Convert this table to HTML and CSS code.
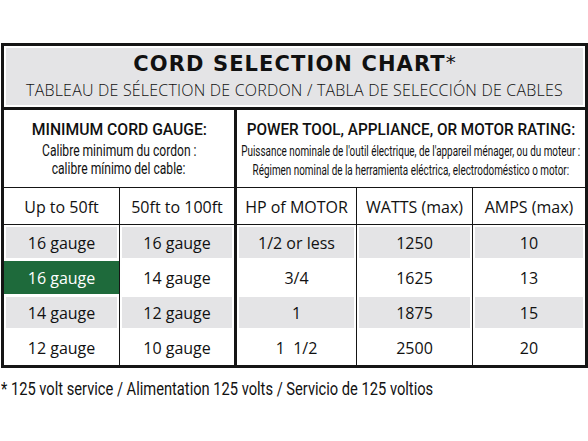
FILE: index.html
```html
<!doctype html>
<html lang="en">
<head>
    <meta charset="UTF-8">
    <title>Cord Selection Chart</title>
    <link rel="stylesheet" href="styles.css">
</head>
<body>
<div id="page">
    <div class="chart">
        <div class="band">
            <h1 class="title">CORD SELECTION CHART<span class="star">*</span></h1>
            <p class="subtitle">TABLEAU DE SÉLECTION DE CORDON / TABLA DE SELECCIÓN DE CABLES</p>
        </div>
        <div class="grid">
            <div class="head gauge-head">
                <h2><span class="narrow">MINIMUM CORD GAUGE:</span></h2>
                <p class="fr"><span class="narrow">Calibre minimum du cordon :</span></p>
                <p class="fr"><span class="narrow">calibre mínimo del cable:</span></p>
            </div>
            <div class="head rating-head">
                <h2><span class="narrow">POWER TOOL, APPLIANCE, OR MOTOR RATING:</span></h2>
                <p class="small"><span class="narrow">Puissance nominale de l'outil électrique, de l'appareil ménager, ou du moteur :</span></p>
                <p class="small"><span class="narrow">Régimen nominal de la herramienta eléctrica, electrodoméstico o motor:</span></p>
            </div>

            <div class="cell col-name">Up to 50ft</div>
            <div class="cell col-name split">50ft to 100ft</div>
            <div class="cell col-name">HP of MOTOR</div>
            <div class="cell col-name">WATTS (max)</div>
            <div class="cell col-name last">AMPS (max)</div>

            <div class="cell row odd">16 gauge</div>
            <div class="cell row odd split">16 gauge</div>
            <div class="cell row odd">1/2 or less</div>
            <div class="cell row odd">1250</div>
            <div class="cell row odd last">10</div>

            <div class="cell row pick">16 gauge</div>
            <div class="cell row split">14 gauge</div>
            <div class="cell row">3/4</div>
            <div class="cell row">1625</div>
            <div class="cell row last">13</div>

            <div class="cell row odd">14 gauge</div>
            <div class="cell row odd split">12 gauge</div>
            <div class="cell row odd">1</div>
            <div class="cell row odd">1875</div>
            <div class="cell row odd last">15</div>

            <div class="cell row">12 gauge</div>
            <div class="cell row split">10 gauge</div>
            <div class="cell row">1&nbsp;&nbsp;1/2</div>
            <div class="cell row">2500</div>
            <div class="cell row last">20</div>
        </div>
    </div>
    <p class="note"><span class="narrow">* 125 volt service / Alimentation 125 volts / Servicio de 125 voltios</span></p>
</div>
</body>
</html>
```

FILE: styles.css
```css
* {
    margin: 0;
    padding: 0;
    box-sizing: border-box;
}

body {
    background-color: #fff;
    color: #111;
    font-family: "Open Sans", sans-serif;
}

#page {
    padding: 43px 0 0 1px;
}

.chart {
    width: 587px;
    border: 3px solid #151515;
}

.band {
    height: 64px;
    padding-top: 6px;
    background-color: #e4e4e6;
    box-shadow: inset 0 0 0 2px #fff;
    border-bottom: 3px solid #151515;
    text-align: center;
}

.title {
    font-family: "DejaVu Sans", sans-serif;
    font-size: 21px;
    font-weight: 700;
    line-height: 25px;
    letter-spacing: 1.1px;
}

.title .star {
    font-weight: 400;
    font-size: 20px;
    vertical-align: top;
    line-height: 20px;
    letter-spacing: 0;
}

.subtitle {
    margin-top: 3px;
    font-size: 16px;
    font-weight: 300;
    line-height: 20px;
    letter-spacing: 0.2px;
}

.grid {
    display: grid;
    grid-template-columns: 116px 117px 120px 116px 112px;
    grid-template-rows: 78px 37px 35px 35px 35px 35px;
}

.head {
    border-bottom: 1px solid #151515;
    padding-top: 10px;
    overflow: hidden;
}

.head h2,
.head p {
    display: flex;
    justify-content: center;
}

.gauge-head {
    grid-column: 1 / 3;
    border-right: 3px solid #151515;
}

.rating-head {
    grid-column: 3 / 6;
}

.head h2 {
    font-size: 16px;
    font-weight: 500;
    line-height: 20px;
}

/* narrow type: squeezed sideways, the condensed cut is not installed */
.narrow {
    display: inline-block;
    flex-shrink: 0;
    font-family: Roboto, sans-serif;
    white-space: nowrap;
    transform-origin: center;
}

.gauge-head h2 .narrow {
    transform: scaleX(0.98);
}

.rating-head h2 .narrow {
    transform: scaleX(0.955);
}

.fr {
    font-size: 16px;
    line-height: 18px;
}

.fr .narrow {
    transform: scaleX(0.755);
}

.gauge-head .fr:nth-of-type(1) {
    margin-top: 2px;
}

.small {
    font-size: 14px;
    line-height: 19px;
}

.small .narrow {
    transform: scaleX(0.707);
}

.rating-head .small:nth-of-type(1) {
    margin-top: 2px;
}

.cell {
    display: flex;
    align-items: center;
    justify-content: center;
    font-size: 16px;
    border-right: 1px solid #151515;
}

.cell.split {
    border-right: 3px solid #151515;
}

.cell.last {
    border-right: none;
}

.col-name {
    border-bottom: 1px solid #151515;
    padding-top: 1px;
}

.row {
    padding-top: 1px;
}

.odd {
    background-color: #e4e4e6;
    box-shadow: inset 0 0 0 2px #fff;
}

.pick {
    background-color: #1e6a3b;
    color: #fff;
    box-shadow: inset 0 1px 0 #fff, inset 0 -1px 0 #fff;
}

.note {
    margin-top: 9px;
    font-size: 18px;
    line-height: 22px;
}

.note .narrow {
    transform-origin: left center;
    transform: scaleX(0.815);
}
```
